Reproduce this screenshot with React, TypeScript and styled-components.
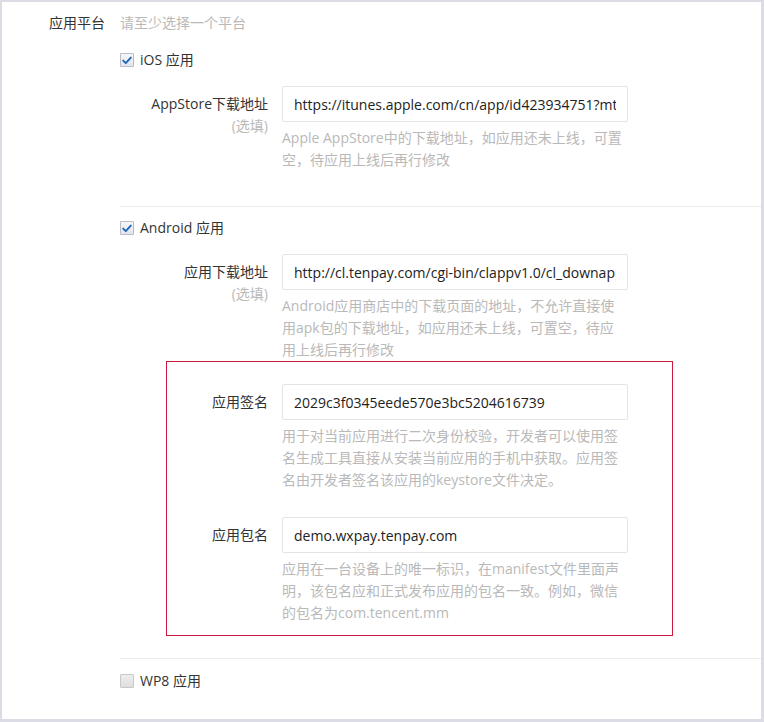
import React from 'react'
import styled, { createGlobalStyle } from 'styled-components'

const GlobalStyle = createGlobalStyle`
  html, body {
    margin: 0;
    padding: 0;
    background: #ffffff;
  }
  body {
    font-family: "Open Sans", "Noto Sans CJK SC", sans-serif;
    font-size: 14px;
    color: #333333;
  }
`

const Frame = styled.div`
  box-sizing: border-box;
  width: 764px;
  height: 722px;
  border-style: solid;
  border-color: #dcdce4;
  border-width: 2px 3px 3px 2px;
  padding-top: 10px;
  background: #ffffff;
  overflow: hidden;
`

const TopRow = styled.div`
  display: flex;
  align-items: center;
  gap: 15px;
  line-height: 22px;
`

const TopLabel = styled.div`
  width: 103px;
  text-align: right;
  color: #333333;
`

const Muted = styled.span`
  color: #b9b9b9;
`

const Section = styled.div`
  padding-left: 118px;
`

const Option = styled.label<{ $top: number }>`
  display: flex;
  align-items: center;
  gap: 6px;
  height: 20px;
  margin-top: ${p => p.$top}px;
  color: #333333;
  line-height: 20px;
  cursor: pointer;
`

const Box = styled.span<{ $checked: boolean }>`
  box-sizing: border-box;
  width: 14px;
  height: 14px;
  border: 1px solid ${p => (p.$checked ? '#b9bcc4' : '#c9c9c9')};
  border-radius: 1px;
  background: ${p => (p.$checked ? 'linear-gradient(#f4f6f9, #e2e6ec)' : 'linear-gradient(#eeeeee, #dedede)')};
  display: flex;
  align-items: center;
  justify-content: center;
`

const FieldRow = styled.div<{ $top: number; $labelWidth: number }>`
  display: grid;
  grid-template-columns: ${p => p.$labelWidth}px 346px;
  column-gap: 14px;
  margin-top: ${p => p.$top}px;
`

const Label = styled.div`
  padding-top: 7px;
  text-align: right;
  line-height: 22px;
  color: #333333;
`

const Optional = styled.div`
  color: #b9b9b9;
`

const Input = styled.input`
  box-sizing: border-box;
  width: 346px;
  height: 36px;
  margin: 0;
  padding: 0 11px;
  border: 1px solid #e4e4e4;
  border-radius: 2px;
  font-family: "Open Sans", "Noto Sans CJK SC", sans-serif;
  font-size: 14px;
  color: #222222;
  background: #ffffff;
  outline: none;
`

const Hint = styled.div`
  margin-top: 5px;
  line-height: 22px;
  color: #b9b9b9;
  white-space: nowrap;
`

const HintLine = styled.div``

const Divider = styled.div<{ $top: number }>`
  height: 1px;
  margin-top: ${p => p.$top}px;
  background: #ebebeb;
`

const Highlight = styled.div`
  box-sizing: border-box;
  width: 507px;
  margin: 0 0 0 46px;
  padding: 22px 0 11px;
  border: 1px solid #cc1b3c;
`

const Check = ({ checked }: { checked: boolean }) => (
  <Box $checked={checked}>
    {checked && (
      <svg width="10" height="9" viewBox="0 0 10 9">
        <path d="M1.2 4.6 L3.8 7.2 L8.8 1.6" fill="none" stroke="#2466b8" strokeWidth="1.9" strokeLinecap="round" strokeLinejoin="round" />
      </svg>
    )}
  </Box>
)

interface FieldProps {
  label: string
  optional?: boolean
  value: string
  hint: string[]
  top: number
  labelWidth: number
}

const Field = ({ label, optional, value, hint, top, labelWidth }: FieldProps) => (
  <FieldRow $top={top} $labelWidth={labelWidth}>
    <Label>
      {label}
      {optional && <Optional>(选填)</Optional>}
    </Label>
    <div>
      <Input defaultValue={value} readOnly />
      <Hint>
        {hint.map(line => (
          <HintLine key={line}>{line}</HintLine>
        ))}
      </Hint>
    </div>
  </FieldRow>
)

export default function App() {
  return (
    <>
      <GlobalStyle />
      <Frame>
        <TopRow>
          <TopLabel>应用平台</TopLabel>
          <Muted>请至少选择一个平台</Muted>
        </TopRow>
        <Section>
          <Option $top={16}>
            <Check checked />
            iOS 应用
          </Option>
          <Field
            top={16}
            labelWidth={148}
            label="AppStore下载地址"
            optional
            value="https://itunes.apple.com/cn/app/id423934751?mt=8"
            hint={['Apple AppStore中的下载地址，如应用还未上线，可置', '空，待应用上线后再行修改']}
          />
          <Divider $top={35} />
          <Option $top={11}>
            <Check checked />
            Android 应用
          </Option>
          <Field
            top={16}
            labelWidth={148}
            label="应用下载地址"
            optional
            value="http://cl.tenpay.com/cgi-bin/clappv1.0/cl_downapp.cgi"
            hint={['Android应用商店中的下载页面的地址，不允许直接使', '用apk包的下载地址，如应用还未上线，可置空，待应', '用上线后再行修改']}
          />
          <Highlight>
            <Field
              top={0}
              labelWidth={101}
              label="应用签名"
              value="2029c3f0345eede570e3bc5204616739"
              hint={['用于对当前应用进行二次身份校验，开发者可以使用签', '名生成工具直接从安装当前应用的手机中获取。应用签', '名由开发者签名该应用的keystore文件决定。']}
            />
            <Field
              top={26}
              labelWidth={101}
              label="应用包名"
              value="demo.wxpay.tenpay.com"
              hint={['应用在一台设备上的唯一标识，在manifest文件里面声', '明，该包名应和正式发布应用的包名一致。例如，微信', '的包名为com.tencent.mm']}
            />
          </Highlight>
          <Divider $top={22} />
          <Option $top={12}>
            <Check checked={false} />
            WP8 应用
          </Option>
        </Section>
      </Frame>
    </>
  )
}
